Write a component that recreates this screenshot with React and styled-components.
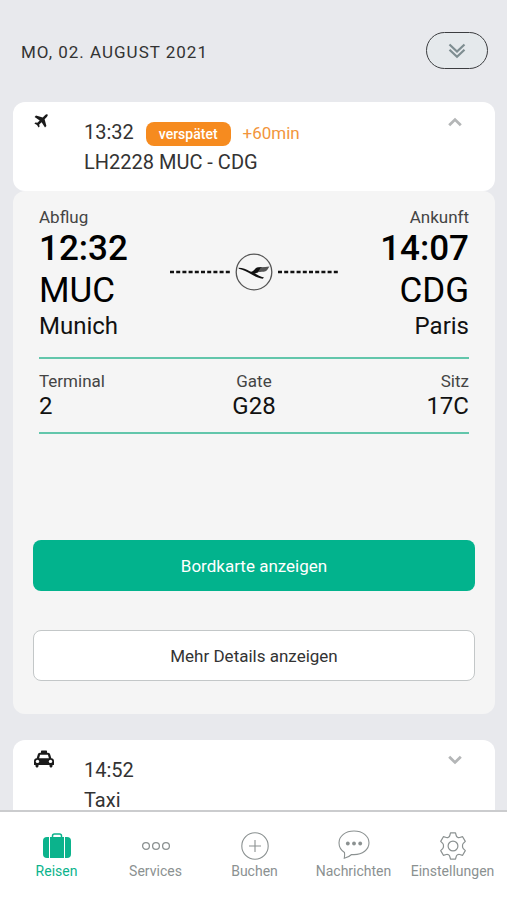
import React, { useState } from "react";
import styled, { createGlobalStyle } from "styled-components";

const GlobalStyle = createGlobalStyle`
  * {
    box-sizing: border-box;
  }
  body {
    margin: 0;
    background: #e8e9ed;
    color: #333;
    font-family: Roboto, "Liberation Sans", sans-serif;
  }
  button {
    font-family: inherit;
    cursor: pointer;
  }
`;

const Screen = styled.div`
  height: 100vh;
  display: flex;
  flex-direction: column;
`;

const Timeline = styled.main`
  flex: 1;
  min-height: 0;
  overflow-y: auto;
  scrollbar-width: none;
  padding: 0 12px 0 13px;
`;

const DayHeader = styled.header`
  display: flex;
  align-items: center;
  justify-content: space-between;
  padding: 32px 7px 33px 8px;
  h1 {
    margin: 0;
    padding-top: 3px;
    font-size: 17px;
    line-height: 24px;
    font-weight: 400;
    letter-spacing: 1px;
  }
`;

const PillButton = styled.button`
  display: flex;
  align-items: center;
  justify-content: center;
  width: 62px;
  height: 37px;
  padding: 0;
  border: 1px solid #3c3d40;
  border-radius: 19px;
  background: #e5e9ec;
`;

const Card = styled.section`
  display: grid;
  grid-template-columns: 50px 1fr auto;
  padding: 15px 33px 14px 21px;
  border-radius: 12px;
  background: #fff;
`;

const Kind = styled.div`
  display: flex;
  align-items: center;
  height: 20px;
  margin-top: -6px;
  color: #1a1a1a;
`;

const Line = styled.p`
  display: flex;
  align-items: baseline;
  margin: 0;
  font-size: 20px;
  line-height: 30px;
`;

const Badge = styled.span`
  margin-left: 12px;
  padding: 0 13px;
  border-radius: 8px;
  background: #f68b1f;
  color: #fff;
  font-size: 14px;
  line-height: 24px;
  font-weight: 500;
`;

const Delay = styled.span`
  margin-left: 12px;
  color: #f2953c;
  font-size: 17px;
  line-height: 24px;
`;

const ToggleButton = styled.button`
  align-self: start;
  display: flex;
  padding: 0;
  border: 0;
  background: none;
`;

const Details = styled.section`
  padding: 15px 20px 33px;
  border-radius: 12px;
  background: #f5f5f5;
`;

const Route = styled.div`
  display: flex;
  justify-content: space-between;
  margin: 0 6px;
  padding-bottom: 17px;
`;

const Label = styled.div`
  font-size: 17px;
  line-height: 22px;
  color: #444;
`;

const Value = styled.div`
  font-size: 24px;
  line-height: 28px;
  color: #111;
`;

const Stop = styled.div`
  flex: 1;
  text-align: ${(props) => props.align || "left"};
  .time,
  .code {
    font-size: 35px;
    line-height: 42px;
    color: #000;
  }
  .time {
    font-weight: 500;
  }
`;

const Carrier = styled.div`
  display: flex;
  align-items: center;
  gap: 5px;
  padding-bottom: 3px;
`;

const Facts = styled.div`
  display: grid;
  grid-template-columns: repeat(3, 1fr);
  margin: 0 6px 106px;
  padding: 11px 0 12px;
  border-top: 2px solid #62c6ab;
  border-bottom: 2px solid #62c6ab;
`;

const Fact = styled.div`
  text-align: ${(props) => props.align || "left"};
`;

const Actions = styled.div`
  display: grid;
  gap: 39px;
`;

const ActionButton = styled.button`
  height: 51px;
  border: ${(props) => (props.$primary ? "0" : "1px solid #c3c7c8")};
  border-radius: 8px;
  background: ${(props) => (props.$primary ? "#02b38d" : "#fff")};
  color: ${(props) => (props.$primary ? "#fff" : "#333")};
  font-size: 17px;
`;

const NextTrip = styled.div`
  margin-top: 26px;
`;

const TabBar = styled.nav`
  display: grid;
  grid-template-columns: repeat(5, 1fr);
  height: 90px;
  padding: 18px 5px 0 7px;
  border-top: 2px solid #cbccce;
  background: #fff;
`;

const Tab = styled.a`
  display: flex;
  flex-direction: column;
  align-items: center;
  color: ${(props) => (props.$active ? "#0bb38c" : "#8b9191")};
  font-size: 14px;
  line-height: 18px;
  text-decoration: none;
`;

const Chevron = ({ up }) => (
  <svg width="14" height="10" viewBox="0 0 14 10" fill="none" stroke="#b4b6b7" strokeWidth="2.8">
    <path d={up ? "M1.2 8.3 7 2.6l5.8 5.7" : "M1.2 1.7 7 7.4l5.8-5.7"} />
  </svg>
);

const DoubleChevron = () => (
  <svg width="18" height="16" viewBox="0 0 18 16" fill="none" stroke="#7e8d91" strokeWidth="2.2">
    <path d="M1.5 1.5 9 8.500l7.500-7" />
    <path d="M1.5 6.800 9 13.800l7.500-7" />
  </svg>
);

const PlaneIcon = () => (
  <svg width="14" height="14" viewBox="0 0 14 14" fill="currentColor">
    <path d="M13.500.5c.5.700.1 1.700-.7 2.500l-2.200 2.300 1.800 6.700L11 13.400 7.600 8.300l-2.400 2.300.400 2L4.600 13.600 3 11 .400 9.400l1-1 2 .4 2.300-2.400L.6 3 2 1.600l6.700 1.800L11 1.200C11.800.4 12.800 0 13.500.5z" />
  </svg>
);

const TaxiIcon = () => (
  <svg width="20" height="18" viewBox="0 0 20 18">
    <path
      d="M7.700.5h4.600c.5 0 .7.300.7.700v1.500h1c1.200 0 1.900.7 2.200 1.800l1.100 3.700c1.700.1 2.700 1.300 2.700 2.800v3.500c0 .4-.2.600-.6.600h-.9v.9c0 .9-.6 1.500-1.500 1.500s-1.500-.6-1.500-1.500v-.9h-11v.9c0 .9-.6 1.500-1.500 1.500S1.500 16.900 1.500 16v-.9H.6c-.4 0-.6-.2-.6-.6V11c0-1.500 1-2.700 2.700-2.800l1.100-3.700C4.100 3.400 4.800 2.700 6 2.700h1V1.200c0-.4.2-.7.700-.7z"
      fill="#1a1a1a"
    />
    <path d="M5.100 8.200 6 5.100c.1-.3.200-.4.500-.4h7c.3 0 .4.100.5.400l.9 3.100z" fill="#fff" />
    <circle cx="3.500" cy="11.400" r="1.700" fill="#fff" />
    <circle cx="16.500" cy="11.400" r="1.700" fill="#fff" />
  </svg>
);

const CraneLogo = () => (
  <svg width="38" height="38" viewBox="0 0 38 38">
    <circle cx="19" cy="19" r="17.800" fill="none" stroke="#555" strokeWidth="1.300" />
    <path
      d="M3.500 14.800c4.500.2 7.800 1.400 10.800 3.200 1.700 1 3.200.8 4.300-.4 1.600-1.700 2.300-3 4.700-3.300l4-.4-3.500 4.800c-1 1-2.400 1.400-4.200 1.600 3 1.900 5.700 3.300 9.400 4.300l-1.300 1.100c-4.700-.9-8.200-2.600-11.400-4.500C12 18.800 8.500 17 3.800 15.800z"
      fill="#111"
    />
    <path d="M26 14.200c3-.2 5.500-.3 8.500-.700-1.200 1.600-2.200 4-4 4.800-2.400.7-4.600.6-7.500.8z" fill="#555" />
  </svg>
);

const Dashes = () => (
  <svg width="60" height="4" viewBox="0 0 60 4">
    <path d="M0 2h60" stroke="#111" strokeWidth="2.600" strokeDasharray="4 2.200" />
  </svg>
);

const SuitcaseIcon = () => (
  <svg width="30" height="32" viewBox="0 0 30 32">
    <path d="M10.500 7.500V6c0-1.200.8-2 2-2h5c1.200 0 2 .8 2 2v1.500" fill="none" stroke="currentColor" strokeWidth="1.500" />
    <rect x="1" y="7" width="28" height="21" rx="4" fill="currentColor" />
    <path d="M7.500 6.500v22M22.500 6.500v22" stroke="#fff" strokeWidth="1" />
  </svg>
);

const DotsIcon = () => (
  <svg width="30" height="32" viewBox="0 0 30 32" fill="none" stroke="currentColor" strokeWidth="1.300">
    <circle cx="5" cy="16" r="3.400" />
    <circle cx="15" cy="16" r="3.400" />
    <circle cx="25" cy="16" r="3.400" />
  </svg>
);

const PlusIcon = () => (
  <svg width="30" height="32" viewBox="0 0 30 32" fill="none" stroke="currentColor" strokeWidth="1.100">
    <circle cx="15" cy="16" r="13.200" />
    <path d="M15 10v12M9 16h12" />
  </svg>
);

const BubbleIcon = () => (
  <svg width="32" height="32" viewBox="0 0 32 32" fill="none" stroke="currentColor" strokeWidth="1.100">
    <path d="M16 1C7.500 1 1 6 1 12.800c0 4.200 2 7.500 5.500 9.700.3 2 .2 3.800-.2 5.700 3.200-.6 5.500-2 7.300-3.700l2.400.1c8.500 0 15-5 15-11.800S24.500 1 16 1z" />
    <g fill="currentColor" stroke="none">
      <circle cx="9.800" cy="13.500" r="1.900" />
      <circle cx="16" cy="13.500" r="1.900" />
      <circle cx="22.200" cy="13.500" r="1.900" />
    </g>
  </svg>
);

const GearIcon = () => (
  <svg width="30" height="32" viewBox="0 0 30 32" fill="none" stroke="currentColor" strokeWidth="1.200" strokeLinejoin="round">
    <path d="M12.500 2.800h5l.7 2.700c.3 1.400 2 2.400 3.500 2l2.900-.8 2.700 4.700-2 2c-1.100 1.100-1.100 4.100 0 5.200l2 2-2.700 4.700-2.900-.8c-1.500-.4-3.200.6-3.500 2l-.7 2.700h-5l-.7-2.700c-.3-1.400-2-2.400-3.500-2l-2.900.8-2.700-4.700 2-2c1.100-1.100 1.100-4.100 0-5.200l-2-2 2.700-4.700 2.900.8c1.500.4 3.200-.6 3.500-2z" />
    <circle cx="15" cy="16" r="4.900" />
  </svg>
);

const tabs = [
  { label: "Reisen", icon: <SuitcaseIcon />, active: true },
  { label: "Services", icon: <DotsIcon /> },
  { label: "Buchen", icon: <PlusIcon /> },
  { label: "Nachrichten", icon: <BubbleIcon /> },
  { label: "Einstellungen", icon: <GearIcon /> },
];

const App = () => {
  const [open, setOpen] = useState(true);
  return (
    <Screen>
      <GlobalStyle />
      <Timeline>
        <DayHeader>
          <h1>MO, 02. AUGUST 2021</h1>
          <PillButton aria-label="Alle ausklappen">
            <DoubleChevron />
          </PillButton>
        </DayHeader>
        <Card>
          <Kind>
            <PlaneIcon />
          </Kind>
          <div>
            <Line>
              13:32 <Badge>verspätet</Badge>
              <Delay>+60min</Delay>
            </Line>
            <Line>LH2228 MUC - CDG</Line>
          </div>
          <ToggleButton aria-label="Flugdetails" aria-expanded={open} onClick={() => setOpen(!open)}>
            <Chevron up={open} />
          </ToggleButton>
        </Card>
        {open && (
          <Details>
            <Route>
              <Stop>
                <Label>Abflug</Label>
                <div className="time">12:32</div>
                <div className="code">MUC</div>
                <Value>Munich</Value>
              </Stop>
              <Carrier>
                <Dashes />
                <CraneLogo />
                <Dashes />
              </Carrier>
              <Stop align="right">
                <Label>Ankunft</Label>
                <div className="time">14:07</div>
                <div className="code">CDG</div>
                <Value>Paris</Value>
              </Stop>
            </Route>
            <Facts>
              <Fact>
                <Label>Terminal</Label>
                <Value>2</Value>
              </Fact>
              <Fact align="center">
                <Label>Gate</Label>
                <Value>G28</Value>
              </Fact>
              <Fact align="right">
                <Label>Sitz</Label>
                <Value>17C</Value>
              </Fact>
            </Facts>
            <Actions>
              <ActionButton $primary>Bordkarte anzeigen</ActionButton>
              <ActionButton>Mehr Details anzeigen</ActionButton>
            </Actions>
          </Details>
        )}
        <NextTrip>
          <Card>
            <Kind>
              <TaxiIcon />
            </Kind>
            <div>
              <Line>14:52</Line>
              <Line>Taxi</Line>
            </div>
            <ToggleButton aria-label="Taxidetails" aria-expanded={false}>
              <Chevron />
            </ToggleButton>
          </Card>
        </NextTrip>
      </Timeline>
      <TabBar>
        {tabs.map((tab) => (
          <Tab key={tab.label} href="#" $active={tab.active}>
            {tab.icon}
            {tab.label}
          </Tab>
        ))}
      </TabBar>
    </Screen>
  );
};

export default App;
